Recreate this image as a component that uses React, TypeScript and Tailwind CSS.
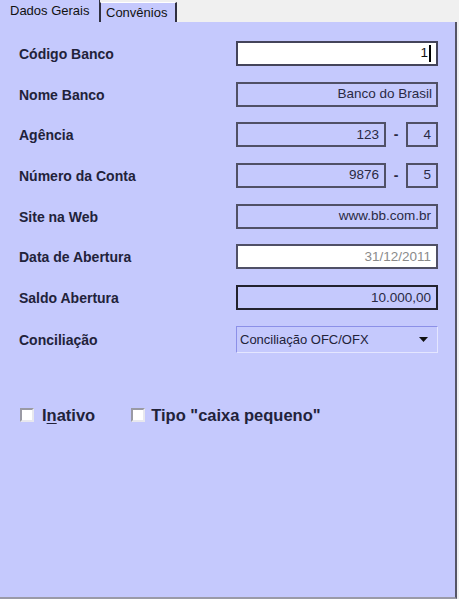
import React from "react";

const font = { fontFamily: '"Liberation Sans", Arial, sans-serif' };

function Label({ children }: { children: React.ReactNode }) {
  return (
    <div className="w-[236px] shrink-0 pl-[19px] pt-[2px] text-[14px] font-bold text-[#22223a]">{children}</div>
  );
}

export default function App() {
  return (
    <div className="w-[459px] h-[599px] bg-[#f0f0f0] flex flex-col" style={font}>
      {/* tabs */}
      <div className="h-[22px] flex items-end shrink-0">
        <div className="h-[22px] w-[100px] bg-[#c5c9fd] border-r border-[#303040] flex items-center pl-[10px] text-[13px] text-[#111]">
          Dados Gerais
        </div>
        <div className="h-[20px] w-[77px] bg-[#c5c9fd] border-l border-[#303040] border-t border-t-white border-r-2 border-r-[#303040] flex items-center pl-[5px] text-[13px] text-[#111]">
          Convênios
        </div>
      </div>
      {/* panel */}
      <div className="w-[457px] flex-1 bg-[#c5c9fd] border-r-2 border-r-[#555566] border-b-2 border-b-[#9a9aa8] flex flex-col pt-[19px]">
        <div className="flex flex-col gap-[15.7px]">
          <div className="flex items-center h-[25px]">
            <Label>Código Banco</Label>
            <div className="w-[202px] h-[25px] bg-white border-2 border-[#44445a] flex items-center justify-end pr-[5px] text-[13.5px] text-[#111]">
              1<span className="ml-[1px] w-[2px] h-[17px] bg-black" />
            </div>
          </div>
          <div className="flex items-center h-[25px]">
            <Label>Nome Banco</Label>
            <div className="w-[202px] h-[25px] border-2 border-[#505066] flex items-center justify-end pr-[4px] text-[13.5px] text-[#2a2a44]">
              Banco do Brasil
            </div>
          </div>
          <div className="flex items-center h-[25px]">
            <Label>Agência</Label>
            <div className="w-[150px] h-[25px] border-2 border-[#505066] flex items-center justify-end pr-[5px] text-[13.5px] text-[#2a2a44]">
              123
            </div>
            <div className="w-[20px] text-center text-[14px] font-bold text-[#2a2a44]">-</div>
            <div className="w-[32px] h-[25px] border-2 border-[#505066] flex items-center justify-end pr-[5px] text-[13.5px] text-[#2a2a44]">
              4
            </div>
          </div>
          <div className="flex items-center h-[25px]">
            <Label>Número da Conta</Label>
            <div className="w-[150px] h-[25px] border-2 border-[#505066] flex items-center justify-end pr-[5px] text-[13.5px] text-[#2a2a44]">
              9876
            </div>
            <div className="w-[20px] text-center text-[14px] font-bold text-[#2a2a44]">-</div>
            <div className="w-[32px] h-[25px] border-2 border-[#505066] flex items-center justify-end pr-[5px] text-[13.5px] text-[#2a2a44]">
              5
            </div>
          </div>
          <div className="flex items-center h-[25px]">
            <Label>Site na Web</Label>
            <div className="w-[202px] h-[25px] border-2 border-[#505066] flex items-center justify-end pr-[5px] text-[13.5px] text-[#2a2a44]">
              www.bb.com.br
            </div>
          </div>
          <div className="flex items-center h-[25px]">
            <Label>Data de Abertura</Label>
            <div className="w-[202px] h-[25px] bg-white border-2 border-[#505066] flex items-center justify-end pr-[5px] text-[13.5px] text-[#8a8a8a]">
              31/12/2011
            </div>
          </div>
          <div className="flex items-center h-[25px]">
            <Label>Saldo Abertura</Label>
            <div className="w-[202px] h-[25px] border-2 border-[#22222e] flex items-center justify-end pr-[5px] text-[13.5px] text-[#2a2a44]">
              10.000,00
            </div>
          </div>
        </div>
        <div className="flex items-center h-[27px] mt-[16px]">
          <Label>Conciliação</Label>
          <div className="w-[202px] h-[27px] border border-t-[#8c90e8] border-l-[#8c90e8] border-r-[#e4e6ff] border-b-[#e4e6ff] flex items-center justify-between pl-[3px] pr-[9px] text-[13px] text-[#22223a]">
            <span>Conciliação OFC/OFX</span>
            <svg width="9" height="5" viewBox="0 0 9 5">
              <path d="M0 0 H9 L4.5 5 Z" fill="#111" />
            </svg>
          </div>
        </div>
        <div className="flex items-center mt-[54px] pl-[20px] h-[16px]">
          <span className="w-[14px] h-[14px] bg-white border-2 border-t-[#9a9aa4] border-l-[#9a9aa4] border-r-[#e8e8ee] border-b-[#e8e8ee]" />
          <span className="ml-[8px] text-[16.5px] font-bold text-[#22223a]">
            I<span className="underline underline-offset-2">n</span>ativo
          </span>
          <span className="ml-[36px] w-[14px] h-[14px] bg-white border-2 border-t-[#9a9aa4] border-l-[#9a9aa4] border-r-[#e8e8ee] border-b-[#e8e8ee]" />
          <span className="ml-[6px] text-[16.5px] font-bold text-[#22223a]">Tipo "caixa pequeno"</span>
        </div>
      </div>
    </div>
  );
}
